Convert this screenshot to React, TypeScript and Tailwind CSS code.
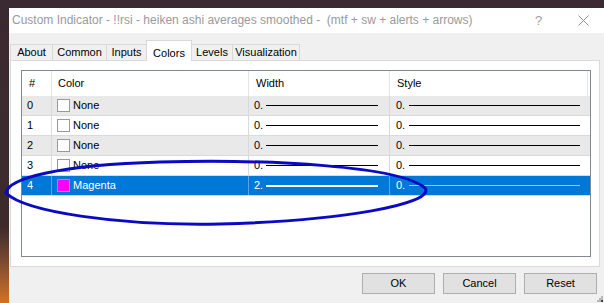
import React from "react";

type Row = { id: number; color: string; name: string; width: string; style: string };

const rows: Row[] = [
  { id: 0, color: "#ffffff", name: "None", width: "0.", style: "0." },
  { id: 1, color: "#ffffff", name: "None", width: "0.", style: "0." },
  { id: 2, color: "#ffffff", name: "None", width: "0.", style: "0." },
  { id: 3, color: "#ffffff", name: "None", width: "0.", style: "0." },
  { id: 4, color: "#ff00ff", name: "Magenta", width: "2.", style: "0." },
];

const tabs = [
  { label: "About", w: "w-[42px]" },
  { label: "Common", w: "w-[54px]" },
  { label: "Inputs", w: "w-[40px]" },
  { label: "Colors", w: "w-[46px]", active: true },
  { label: "Levels", w: "w-[40px]" },
  { label: "Visualization", w: "w-[68px]" },
];

function ColorRow({ row }: { row: Row }) {
  const selected = row.id === 4;
  const bg = selected ? "bg-[#0078d7] text-white" : row.id % 2 === 0 ? "bg-[#e9e9e9] text-black" : "bg-white text-black";
  const sep = selected ? "border-[#5aa3e4]" : "border-[#d9d9d9]";
  return (
    <div className={`grid grid-cols-[30px_197px_141px_198px] h-[20px] border-b border-[#dadada] ${bg}`}>
      <div className={`flex items-center pl-[5px] border-r ${sep}`}>{row.id}</div>
      <div className={`flex items-center pl-[5px] gap-[3px] border-r ${sep}`}>
        <div
          className="w-[13px] h-[13px] border border-[#9a9a9a]"
          style={{ backgroundColor: row.color }}
        />
        <span>{row.name}</span>
      </div>
      <div className={`flex items-center pl-[5px] border-r ${sep}`}>
        <span>{row.width}</span>
        <div className={`flex-1 ml-[3px] mr-[11px] ${selected ? "h-[2px] bg-white" : "h-[1px] bg-black"}`} />
      </div>
      <div className="flex items-center pl-[6px]">
        <span>{row.style}</span>
        <div className={`flex-1 ml-[4px] mr-[8px] h-[1px] ${selected ? "bg-[#9cc6ee]" : "bg-black"}`} />
      </div>
    </div>
  );
}

export default function App() {
  return (
    <div
      className="relative w-[604px] h-[303px] overflow-hidden pl-[9px] pt-[8px] bg-gradient-to-b from-[#3a2a31] via-[#3d2b2b] via-75% to-[#d3721f]"
      style={{ fontFamily: '"Liberation Sans", Arial, sans-serif' }}
    >
      <div className="flex flex-col w-[595px] h-[295px] bg-[#f0f0f0]">
        {/* Title bar */}
        <div className="h-[25px] bg-white flex items-start pt-[3px] pl-[3px] text-[12px] text-[#9a9a9a] relative">
          <span className="whitespace-pre">Custom Indicator - !!rsi - heiken ashi averages smoothed -  (mtf + sw + alerts + arrows)</span>
          <span className="absolute left-[526px] top-[3px] text-[13px] text-[#a0a0a0]">?</span>
          <svg className="absolute left-[569px] top-[7px]" width="11" height="11" viewBox="0 0 11 11">
            <path d="M0.5 0.5 L10.5 10.5 M10.5 0.5 L0.5 10.5" stroke="#8c8c8c" strokeWidth="1" />
          </svg>
        </div>

        {/* Tabs */}
        <div className="flex items-end mt-[7px] pl-[1px] h-[20px] text-[11px] text-black relative z-10">
          {tabs.map((t, i) =>
            t.active ? (
              <div
                key={t.label}
                className={`${t.w} h-[21px] -mb-[1px] bg-white border border-b-0 border-[#d9d9d9] flex items-start justify-center pt-[4px]`}
              >
                {t.label}
              </div>
            ) : (
              <div
                key={t.label}
                className={`${t.w} h-[16px] border-t border-[#d9d9d9] ${i === 0 || !tabs[i - 1].active ? "border-l" : ""} ${i === tabs.length - 1 ? "border-r" : ""} flex items-center justify-center bg-[#f0f0f0]`}
              >
                {t.label}
              </div>
            )
          )}
        </div>

        {/* Tab page */}
        <div className="ml-[1px] w-[590px] h-[207px] border border-[#d9d9d9] bg-white pt-[9px] pl-[10px]">
          <div className="w-[570px] h-[187px] border border-[#828790] bg-white text-[11px]">
            <div className="grid grid-cols-[30px_197px_141px_198px] h-[25px] text-black">
              <div className="flex items-center pl-[7px] border-r border-[#e5e5e5]">#</div>
              <div className="flex items-center pl-[6px] border-r border-[#e5e5e5]">Color</div>
              <div className="flex items-center pl-[7px] border-r border-[#e5e5e5]">Width</div>
              <div className="flex items-center pl-[7px] border-r border-[#e5e5e5]">Style</div>
            </div>
            {rows.map((r) => (
              <ColorRow key={r.id} row={r} />
            ))}
          </div>
        </div>

        {/* Buttons */}
        <div className="flex justify-end gap-[8px] pr-[7px] mt-[6px] text-[11px] text-black">
          {["OK", "Cancel", "Reset"].map((b) => (
            <button
              key={b}
              className="w-[73px] h-[21px] bg-[#e1e1e1] border border-[#adadad] flex items-center justify-center"
            >
              {b}
            </button>
          ))}
        </div>
      </div>

      {/* resize grip */}
      <svg className="absolute right-0 bottom-0" width="8" height="8" viewBox="0 0 8 8">
        <rect x="5" y="1" width="2" height="2" fill="#b8b8b8" />
        <rect x="3" y="3" width="2" height="2" fill="#b8b8b8" />
        <rect x="5" y="3" width="2" height="2" fill="#b8b8b8" />
        <rect x="1" y="5" width="2" height="2" fill="#b8b8b8" />
        <rect x="3" y="5" width="2" height="2" fill="#b8b8b8" />
        <rect x="5" y="5" width="2" height="2" fill="#404040" />
      </svg>

      {/* hand-drawn annotation ellipse */}
      <svg className="absolute left-0 top-0 pointer-events-none" width="604" height="303" viewBox="0 0 604 303">
        <path
          d="M 6 193 C 8 178, 60 165, 160 162 C 270 159, 400 166, 425 188 C 436 204, 340 221, 220 224 C 120 226, 25 212, 6 193 Z"
          fill="none"
          stroke="#0a0ac4"
          strokeWidth="3"
        />
      </svg>
    </div>
  );
}
